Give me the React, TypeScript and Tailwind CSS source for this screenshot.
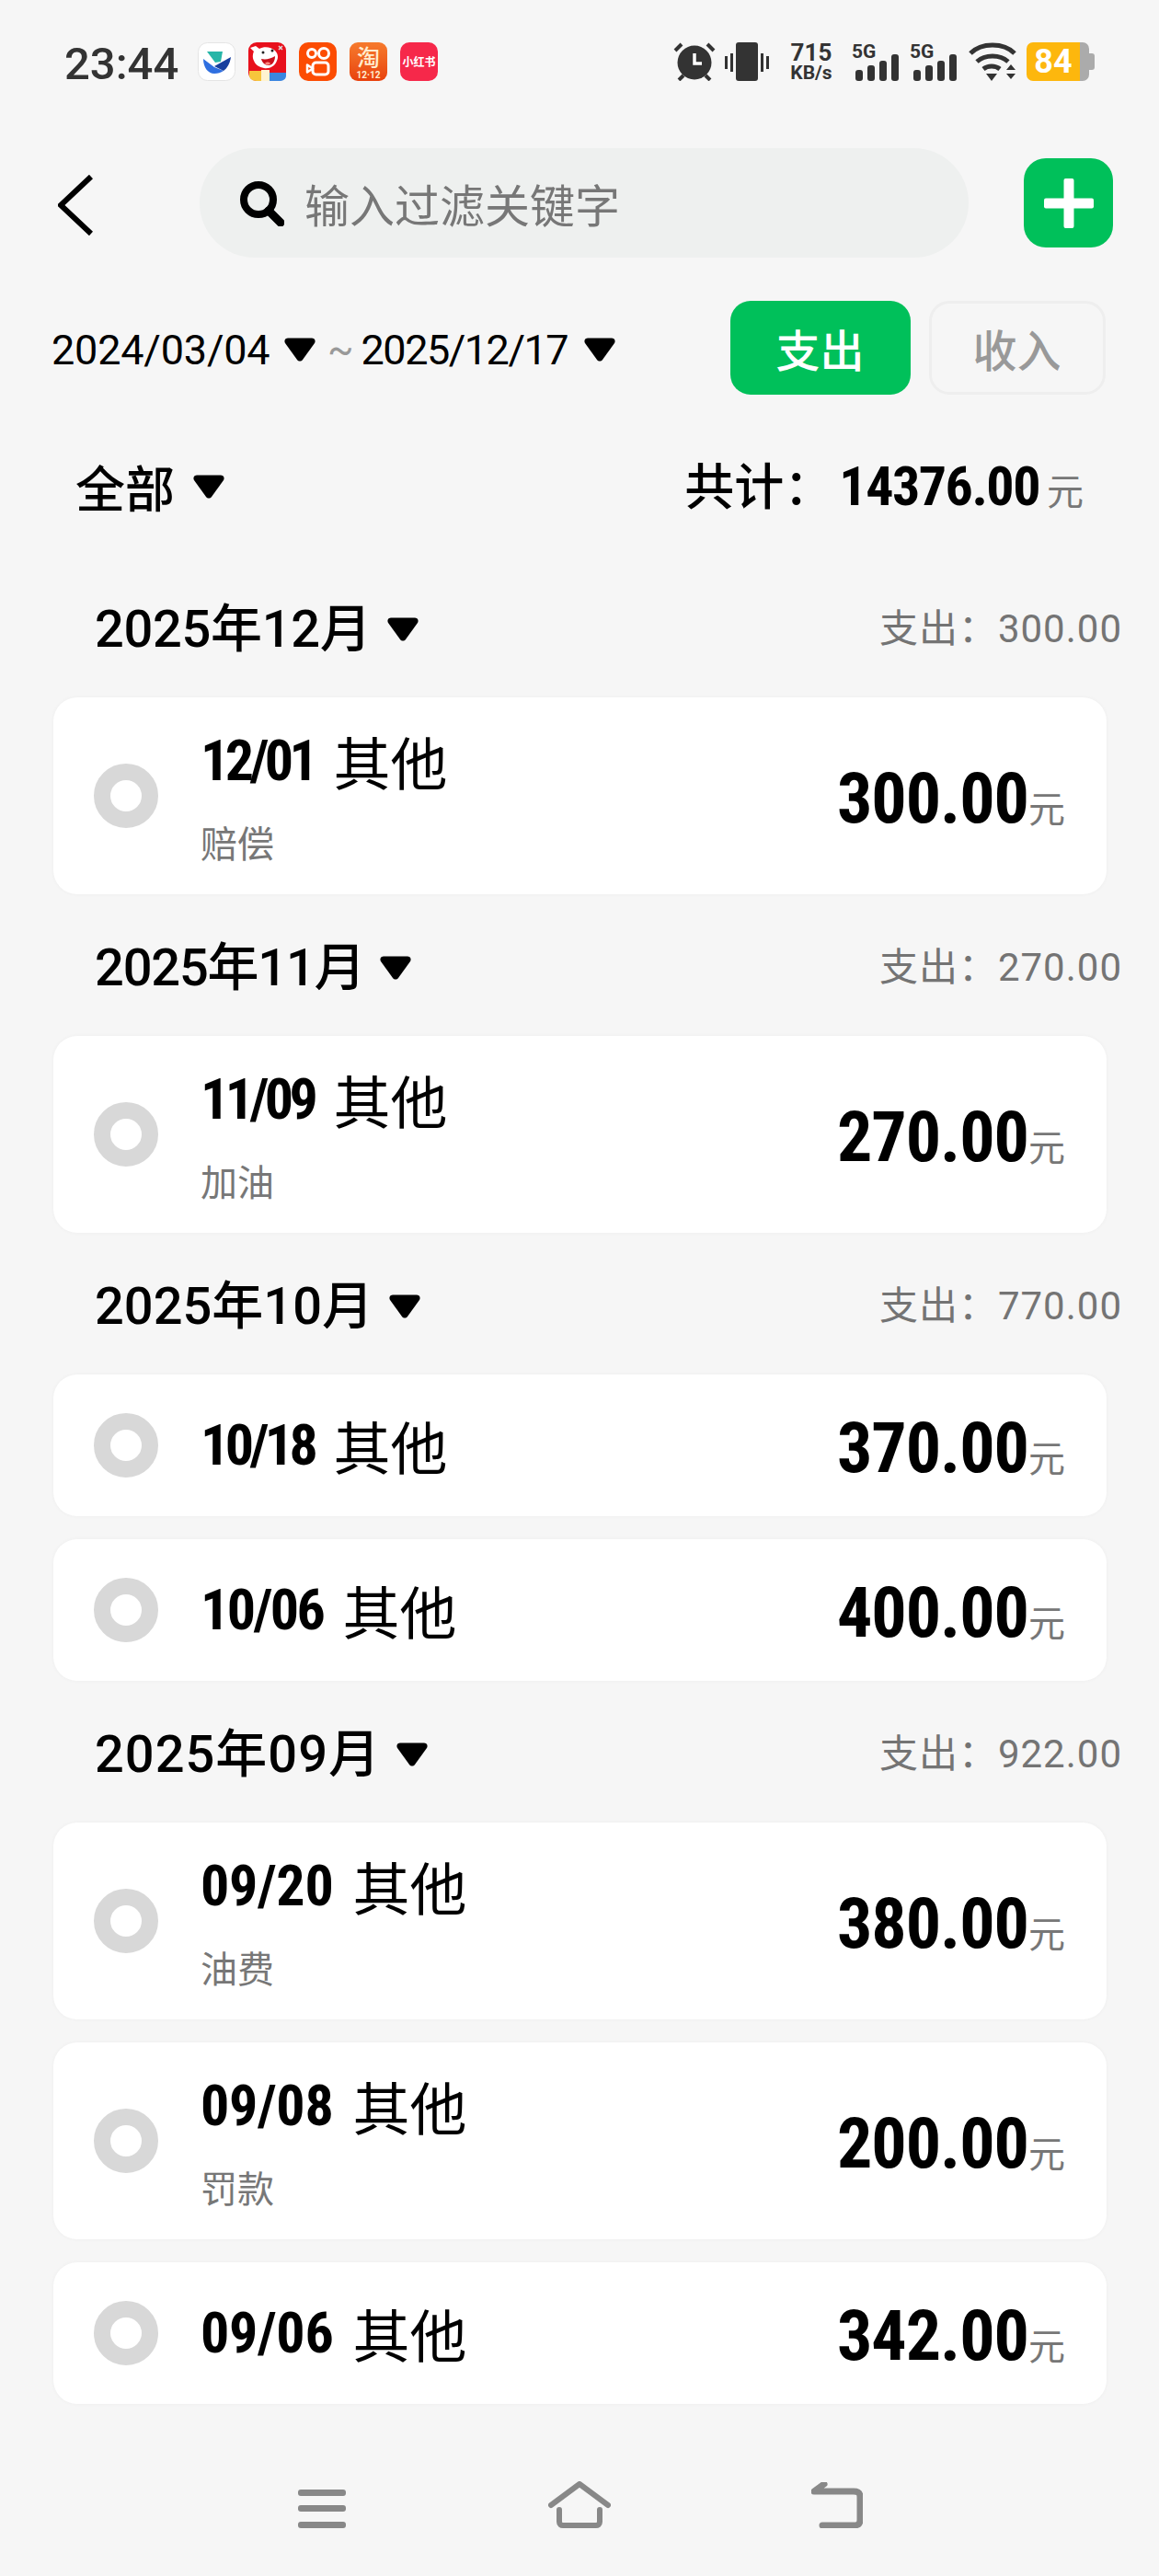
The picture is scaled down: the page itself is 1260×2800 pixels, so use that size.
const sans = "font-['Roboto','Noto_Sans_CJK_SC',sans-serif]";
const cjk = "font-['Noto_Sans_CJK_SC',sans-serif]";
const narrow = "font-['Roboto','Noto_Sans_CJK_SC',sans-serif] font-stretch-[75%]";

const Triangle = () => (
  <svg width="36" height="28" viewBox="0 0 36 28" className="shrink-0">
    <path d="M5 1.500h26c3 0 4.500 3 3 5.500L21 25c-1.500 2-4.500 2-6 0L2 7C.5 4.500 2 1.500 5 1.500z" fill="#000" />
  </svg>
);

const Bars = () => (
  <div className="relative h-[42px] w-[50px]">
    <span className={"absolute left-[-3px] top-[0px] text-[21px] font-bold leading-[21px] text-[#333] " + sans}>5G</span>
    <svg width="50" height="42" viewBox="0 0 50 42" className="absolute left-0 top-0">
      <rect x="1" y="30" width="8" height="12" rx="3" fill="#333" />
      <rect x="14" y="25" width="8" height="17" rx="3" fill="#333" />
      <rect x="27" y="20" width="8" height="22" rx="3" fill="#333" />
      <rect x="40" y="13" width="8" height="29" rx="3" fill="#333" />
    </svg>
  </div>
);

const AppIcons = () => (
  <div className="ml-[21px] flex gap-[14px]">
    <svg width="41" height="42" viewBox="0 0 41 42">
      <rect x=".5" y=".5" width="40" height="41" rx="10" fill="#fff" stroke="#e4e4e4" />
      <path d="M10 10h17l-2 11-6 1z" fill="#27b6a8" />
      <path d="M6 18l12 9 10 4c-3 2-6 3-10 3-7 0-12-7-12-16z" fill="#2f6fe0" />
      <path d="M18 26l18-10c-1 7-4 12-8 15z" fill="#173f9e" />
    </svg>
    <svg width="41" height="42" viewBox="0 0 41 42">
      <rect width="41" height="42" rx="9" fill="#e8101c" />
      <path d="M2 6l6-2 4 3c5-3 13-2 17 2 3 3 4 7 2 11-2 6-8 9-14 8-5-1-9-3-11-8-2-4-1-8 0-10z" fill="#fff" />
      <path d="M14 18c5 1 10 0 15-3 0 6-3 10-7 10-4 0-7-3-8-7z" fill="#c9101b" />
      <path d="M18 23c1-2 5-2 6 0-2 2-4 2-6 0z" fill="#ff8a80" />
      <circle cx="16" cy="11" r="1.500" fill="#222" />
      <circle cx="26" cy="9" r="1.500" fill="#222" />
      <path d="M33 4l4 4M37 4l-4 4" stroke="#ddd" strokeWidth="1.500" />
      <path d="M1 31h13v11H9c-5 0-8-3-8-6z" fill="#f7c53c" />
      <rect x="14" y="30" width="9" height="12" fill="#fff3d0" />
      <path d="M23 33h18v3c0 4-3 6-8 6H23z" fill="#3a86e0" />
    </svg>
    <svg width="41" height="42" viewBox="0 0 41 42">
      <rect width="41" height="42" rx="10" fill="#fc4c02" />
      <circle cx="14" cy="12" r="4.500" fill="none" stroke="#fff" strokeWidth="3" />
      <circle cx="27" cy="12" r="5.500" fill="none" stroke="#fff" strokeWidth="3" />
      <rect x="15" y="22" width="17" height="13" rx="3.500" fill="none" stroke="#fff" strokeWidth="3" />
      <path d="M15 28.500l-6-4v8z" fill="none" stroke="#fff" strokeWidth="2.500" strokeLinejoin="round" />
    </svg>
    <div className="flex h-[42px] w-[41px] flex-col items-center rounded-[9px] bg-linear-to-b from-[#f67a2c] to-[#e8400c]">
      <div className={"text-[25px] font-medium leading-[31px] text-[#ffeccf] " + cjk}>淘</div>
      <div className={"text-[10px] font-bold leading-[10px] text-[#ffeccf] " + sans}>12·12</div>
    </div>
    <div className="flex h-[42px] w-[41px] items-center justify-center rounded-[10px] bg-[#f6284a]">
      <span className={"whitespace-nowrap text-[12px] font-bold leading-none text-white " + cjk}>小红书</span>
    </div>
  </div>
);

const StatusBar = () => (
  <div className="mt-[46px] flex h-[42px] items-center pl-[70px]">
    <span className={"w-[124px] pt-[4px] text-[49px] font-medium leading-none text-[#333] " + sans}>23:44</span>
    <AppIcons />
    <div className="ml-auto mr-[70px] flex items-center">
      <svg width="46" height="42" viewBox="0 0 46 42" fill="#333">
        <circle cx="23" cy="22" r="18.500" />
        <path d="M23 12v11h8" fill="none" stroke="#fff" strokeWidth="3.500" />
        <path d="M2 9l7-7M44 9l-7-7M6 41l5-5M40 41l-5-5" stroke="#333" strokeWidth="4" />
      </svg>
      <svg width="50" height="42" viewBox="0 0 50 42" fill="#333" className="ml-[9px]">
        <rect x="13" y="0" width="24" height="42" rx="3" />
        <rect x="1" y="15" width="3" height="14" />
        <rect x="7" y="12" width="3" height="20" />
        <rect x="40" y="12" width="3" height="20" />
        <rect x="46" y="15" width="3" height="14" />
      </svg>
      <div className={"ml-[20px] flex w-[50px] flex-col items-center font-bold text-[#333] " + sans}>
        <span className="text-[26px] leading-[24px]">715</span>
        <span className="text-[21px] leading-[20px]">KB/s</span>
      </div>
      <div className="ml-[22px]"><Bars /></div>
      <div className="ml-[13px]"><Bars /></div>
      <svg width="52" height="42" viewBox="0 0 52 42" fill="none" className="ml-[11px]">
        <path d="M2 12C14 0 38 0 50 12" stroke="#333" strokeWidth="5" />
        <path d="M9 21c9-8 25-8 34 0" stroke="#333" strokeWidth="5" />
        <path d="M16 29c5-4 13-4 18 0" stroke="#333" strokeWidth="5" />
        <path d="M19 34h12l-6 8z" fill="#333" />
        <path d="M41 30l5-6 5 6zM41 34h10l-5 6z" fill="#333" />
      </svg>
      <div className="ml-[11px] flex h-[42px] w-[74px] items-center">
        <div className={"flex h-[42px] w-[58px] items-center justify-center rounded-l-[7px] bg-[#fdb70d] text-[36px] font-bold leading-none text-white " + sans}>84</div>
        <div className="h-[42px] w-[10px] rounded-r-[7px] bg-[#ababab]" />
        <div className="h-[18px] w-[6px] rounded-r-[3px] bg-[#ababab]" />
      </div>
    </div>
  </div>
);

const SearchRow = () => (
  <div className="mt-[73px] flex items-center pl-[63px] pr-[50px]">
    <svg width="38" height="66" viewBox="0 0 38 66" fill="none" className="mt-[4px]">
      <path d="M36 2L3 33l33 31" stroke="#000" strokeWidth="6" />
    </svg>
    <div className="ml-[116px] flex h-[119px] w-[836px] items-center rounded-full bg-[#eef0ef] pl-[42px]">
      <svg width="50" height="50" viewBox="0 0 50 50" fill="none">
        <circle cx="22" cy="21" r="16" stroke="#000" strokeWidth="8" />
        <path d="M33 33l13 13" stroke="#000" strokeWidth="9" strokeLinecap="round" />
      </svg>
      <span className={"ml-[22px] text-[49px] leading-none text-[#777] " + cjk}>输入过滤关键字</span>
    </div>
    <div className="ml-[60px] flex h-[97px] w-[97px] items-center justify-center rounded-[24px] bg-[#00c05a]">
      <svg width="54" height="54" viewBox="0 0 54 54" fill="#fff">
        <rect x="21.500" y="0" width="11" height="54" rx="2" />
        <rect x="0" y="21.500" width="54" height="11" rx="2" />
      </svg>
    </div>
  </div>
);

const DateRow = () => (
  <div className="mt-[47px] flex items-center pl-[56px]">
    <span className={"w-[238px] pt-[4px] text-[45px] leading-none tracking-[-0.200px] text-black " + sans}>2024/03/04</span>
    <div className="ml-[14px] pt-[4px]"><Triangle /></div>
    <span className={"ml-[12px] pt-[4px] text-[42px] leading-none text-[#999] " + sans}>~</span>
    <span className={"ml-[8px] w-[222px] pt-[4px] text-[45px] leading-none tracking-[-1.500px] text-black " + sans}>2025/12/17</span>
    <div className="ml-[19px] pt-[4px]"><Triangle /></div>
    <div className={"ml-[124px] flex h-[102px] w-[196px] items-center justify-center rounded-[22px] bg-[#00c05a] text-[48px] font-medium leading-none text-white " + cjk}>支出</div>
    <div className={"ml-[20px] flex h-[102px] w-[192px] items-center justify-center rounded-[22px] border-[3px] border-[#eeeeee] text-[48px] font-medium leading-none text-[#999] " + cjk}>收入</div>
  </div>
);

const TotalRow = () => (
  <div className="mt-[70px] flex items-center pl-[82px]">
    <span className={"text-[54px] font-medium leading-none text-black " + cjk}>全部</span>
    <div className="ml-[19px]"><Triangle /></div>
    <div className="ml-auto mr-[82px] flex items-baseline">
      <span className={"text-[54px] font-medium leading-none text-black " + cjk}>共计：</span>
      <span className={"ml-[6px] text-[60px] font-bold leading-none tracking-[-1.500px] text-black " + narrow}>14376.00</span>
      <span className={"ml-[8px] text-[40px] leading-none text-[#777] " + cjk}>元</span>
    </div>
  </div>
);

type Entry = { date: string; track: string; sub?: string; amount: string };
type Month = { title: string; track: string; total: string; entries: Entry[] };

// the 1s in the original font are narrower than Roboto's, so each title gets its own tracking
const months: Month[] = [
  {
    title: "2025年12月",
    track: "tracking-[-0.300px]",
    total: "300.00",
    entries: [{ date: "12/01", track: "tracking-[-4.500px]", sub: "赔偿", amount: "300.00" }],
  },
  {
    title: "2025年11月",
    track: "tracking-[-1.200px]",
    total: "270.00",
    entries: [{ date: "11/09", track: "tracking-[-4.500px]", sub: "加油", amount: "270.00" }],
  },
  {
    title: "2025年10月",
    track: "tracking-[0px]",
    total: "770.00",
    entries: [
      { date: "10/18", track: "tracking-[-4.500px]", amount: "370.00" },
      { date: "10/06", track: "tracking-[-2.500px]", amount: "400.00" },
    ],
  },
  {
    title: "2025年09月",
    track: "tracking-[1px]",
    total: "922.00",
    entries: [
      { date: "09/20", track: "tracking-[-0.300px]", sub: "油费", amount: "380.00" },
      { date: "09/08", track: "tracking-[-0.300px]", sub: "罚款", amount: "200.00" },
      { date: "09/06", track: "tracking-[-0.300px]", amount: "342.00" },
    ],
  },
];

const EntryCard = ({ entry }: { entry: Entry }) => (
  <div className={"flex items-center rounded-[26px] bg-white pl-[44px] pr-[45px] shadow-[0_0_4px_rgba(0,0,0,0.04)] " + (entry.sub ? "h-[214px]" : "h-[154px]")}>
    <div className="h-[70px] w-[70px] shrink-0 rounded-full border-[18px] border-[#d8d8d8]" />
    <div className={"ml-[46px] flex flex-col " + (entry.sub ? "mb-[2px]" : "")}>
      <div className="flex items-center text-[62px] leading-[72px] text-black">
        <span className={"font-bold " + entry.track + " " + narrow}>{entry.date}</span>
        <span className={"ml-[21px] " + cjk}>其他</span>
      </div>
      {entry.sub && <span className={"mt-[30px] text-[40px] leading-[44px] text-[#777] " + cjk}>{entry.sub}</span>}
    </div>
    <div className="ml-auto flex items-baseline pt-[6px]">
      <span className={"text-[76px] font-bold leading-none tracking-[-1px] text-black " + narrow}>{entry.amount}</span>
      <span className={"text-[40px] leading-none text-[#777] " + cjk}>元</span>
    </div>
  </div>
);

const MonthBlock = ({ month }: { month: Month }) => (
  <div>
    <div className="flex h-[154px] items-center pl-[45px] pt-[6px]">
      <span className={"text-[56px] font-medium leading-none text-black " + month.track + " " + sans}>{month.title}</span>
      <div className="ml-[16px]"><Triangle /></div>
      <span className={"ml-auto mr-[-17px] text-[42px] leading-none tracking-[1px] text-[#747474] " + sans}>支出：{month.total}</span>
    </div>
    <div className="flex flex-col gap-[25px]">
      {month.entries.map((entry) => (
        <EntryCard key={entry.date} entry={entry} />
      ))}
    </div>
  </div>
);

const NavBar = () => (
  <div className="mt-auto mb-[52px] flex items-end pl-[324px]">
    <svg width="52" height="42" viewBox="0 0 52 42" fill="#888">
      <rect y="0" width="52" height="7" rx="3" />
      <rect y="17" width="52" height="7" rx="3" />
      <rect y="35" width="52" height="7" rx="3" />
    </svg>
    <svg width="68" height="51" viewBox="0 0 68 51" fill="none" stroke="#888" className="ml-[220px]">
      <path d="M3 26L34 3l31 23" strokeWidth="6" strokeLinecap="round" strokeLinejoin="round" />
      <path d="M12 31v13c0 3 2 4 4 4h36c2 0 4-1 4-4V31" strokeWidth="6" strokeLinecap="round" />
    </svg>
    <svg width="56" height="50" viewBox="0 0 56 50" fill="none" stroke="#888" className="ml-[218px]">
      <path d="M12 47h34c5 0 7-2 7-6V16c0-4-2-6-7-6H3l11-8" strokeWidth="7" strokeLinecap="round" strokeLinejoin="round" />
    </svg>
  </div>
);

export default function App() {
  return (
    <div className="flex h-[2800px] w-[1260px] flex-col overflow-hidden bg-[#f6f6f6]">
      <StatusBar />
      <SearchRow />
      <DateRow />
      <TotalRow />
      <div className="mt-[45px] pl-[58px] pr-[57px]">
        {months.map((month) => (
          <MonthBlock key={month.title} month={month} />
        ))}
      </div>
      <NavBar />
    </div>
  );
}
